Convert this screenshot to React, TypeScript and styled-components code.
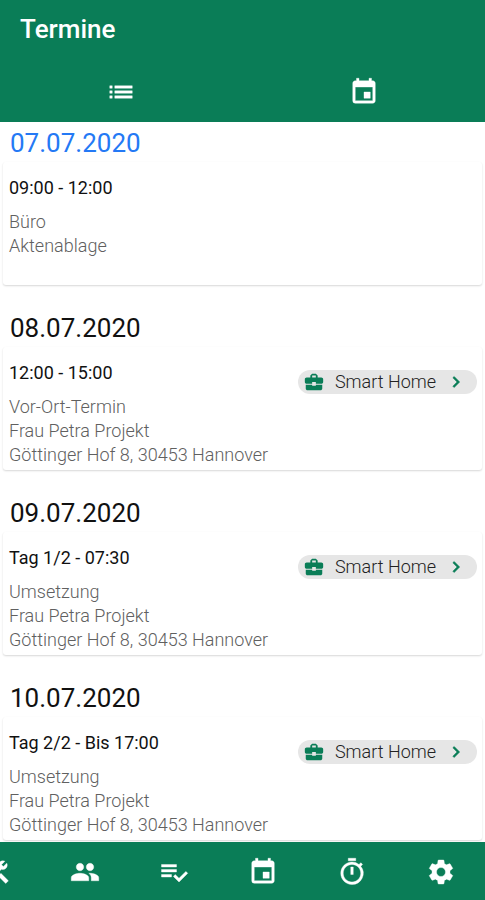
import React from "react";
import styled, { createGlobalStyle } from "styled-components";
import {
  MdBusinessCenter,
  MdChevronRight,
  MdConstruction,
  MdEvent,
  MdList,
  MdOutlineTimer,
  MdPeople,
  MdSettings,
} from "react-icons/md";

const green = "#0a7d57";

const GlobalStyle = createGlobalStyle`
  * {
    box-sizing: border-box;
  }
  body {
    margin: 0;
    background: #fff;
    font-family: Roboto, "Liberation Sans", sans-serif;
  }
`;

const Screen = styled.div`
  display: flex;
  flex-direction: column;
  height: 100vh;
`;

const Header = styled.header`
  flex: none;
  background: ${green};
  color: #fff;
`;

const Title = styled.h1`
  margin: 0;
  padding: 13px 20px 17px;
  font-size: 26px;
  line-height: 32px;
  font-weight: 500;
`;

const Tabs = styled.div`
  display: grid;
  grid-template-columns: 1fr 1fr;
`;

const IconButton = styled.button`
  display: flex;
  align-items: center;
  justify-content: center;
  padding: 0;
  border: 0;
  background: none;
  color: #fff;
  cursor: pointer;

  path:not([fill="none"]) {
    stroke: currentColor;
    stroke-width: 0.3;
  }
`;

const Tab = styled(IconButton)`
  height: 60px;
`;

const Content = styled.main`
  flex: 1;
  min-height: 0;
  overflow: hidden auto;
  scrollbar-width: none;
  display: flex;
  flex-direction: column;
  gap: 22px;
`;

const Day = styled.section`
  flex: none;
  padding: 0 3px;
`;

const DayTitle = styled.h2<{ $today?: boolean }>`
  margin: 0;
  padding: 3px 7px 1px;
  font-size: 26px;
  line-height: 36px;
  font-weight: 400;
  color: ${(p) => (p.$today ? "#2479f5" : "#111")};
`;

const Card = styled.article`
  display: flex;
  justify-content: space-between;
  align-items: flex-start;
  min-height: 123px;
  padding: 14px 5px 0 6px;
  border-radius: 3px;
  background: #fff;
  box-shadow: 0 1px 2px rgba(0, 0, 0, 0.16);
`;

const Time = styled.h3`
  margin: 0 0 10px;
  font-size: 18px;
  line-height: 24px;
  font-weight: 400;
  color: #111;
`;

const Detail = styled.p`
  margin: 0;
  font-size: 18px;
  line-height: 24px;
  font-weight: 300;
  color: #606060;
`;

const Chip = styled.button`
  display: flex;
  align-items: center;
  height: 24px;
  margin-top: 9px;
  padding: 0 10px 0 5px;
  border: 0;
  border-radius: 12px;
  background: #e6e6e6;
  color: ${green};
  font-family: inherit;
  cursor: pointer;
`;

const ChipLabel = styled.span`
  margin: 0 9px 0 10px;
  font-size: 18px;
  line-height: 24px;
  font-weight: 300;
  color: #222;
`;

const Chevron = styled(MdChevronRight)`
  path:not([fill="none"]) {
    stroke: currentColor;
    stroke-width: 0.6;
  }
`;

const BottomNav = styled.nav`
  flex: none;
  display: flex;
  justify-content: flex-end;
  overflow: hidden;
  background: ${green};
`;

const NavItem = styled(IconButton)`
  flex: none;
  width: 89px;
  height: 58px;
  padding-top: 2px;
`;

function ChecklistIcon({ size }: { size: number }) {
  return (
    <svg width={size} height={size} viewBox="0 0 24 24" fill="currentColor" aria-hidden="true">
      <path d="M14 10H2v2h12v-2zm0-4H2v2h12V6zM2 16h8v-2H2v2zm19.5-4.5L23 13l-6.99 7-4.51-4.5L13 14l3.01 3 5.49-5.5z" />
    </svg>
  );
}

const days = [
  { date: "07.07.2020", today: true, time: "09:00 - 12:00", details: ["Büro", "Aktenablage"] },
  {
    date: "08.07.2020",
    time: "12:00 - 15:00",
    details: ["Vor-Ort-Termin", "Frau Petra Projekt", "Göttinger Hof 8, 30453 Hannover"],
    project: "Smart Home",
  },
  {
    date: "09.07.2020",
    time: "Tag 1/2 - 07:30",
    details: ["Umsetzung", "Frau Petra Projekt", "Göttinger Hof 8, 30453 Hannover"],
    project: "Smart Home",
  },
  {
    date: "10.07.2020",
    time: "Tag 2/2 - Bis 17:00",
    details: ["Umsetzung", "Frau Petra Projekt", "Göttinger Hof 8, 30453 Hannover"],
    project: "Smart Home",
  },
];

const navItems = [
  { label: "Werkzeuge", Icon: MdConstruction },
  { label: "Kontakte", Icon: MdPeople },
  { label: "Aufgaben", Icon: ChecklistIcon },
  { label: "Termine", Icon: MdEvent },
  { label: "Zeiterfassung", Icon: MdOutlineTimer },
  { label: "Einstellungen", Icon: MdSettings },
];

export default function App() {
  return (
    <>
      <GlobalStyle />
      <Screen>
        <Header>
          <Title>Termine</Title>
          <Tabs>
            <Tab aria-label="Liste">
              <MdList size={30} />
            </Tab>
            <Tab aria-label="Kalender">
              <MdEvent size={30} />
            </Tab>
          </Tabs>
        </Header>
        <Content>
          {days.map((day) => (
            <Day key={day.date}>
              <DayTitle $today={day.today}>{day.date}</DayTitle>
              <Card>
                <div>
                  <Time>{day.time}</Time>
                  {day.details.map((line) => (
                    <Detail key={line}>{line}</Detail>
                  ))}
                </div>
                {day.project && (
                  <Chip>
                    <MdBusinessCenter size={22} />
                    <ChipLabel>{day.project}</ChipLabel>
                    <Chevron size={22} />
                  </Chip>
                )}
              </Card>
            </Day>
          ))}
        </Content>
        <BottomNav>
          {navItems.map(({ label, Icon }) => (
            <NavItem key={label} aria-label={label}>
              <Icon size={30} />
            </NavItem>
          ))}
        </BottomNav>
      </Screen>
    </>
  );
}
